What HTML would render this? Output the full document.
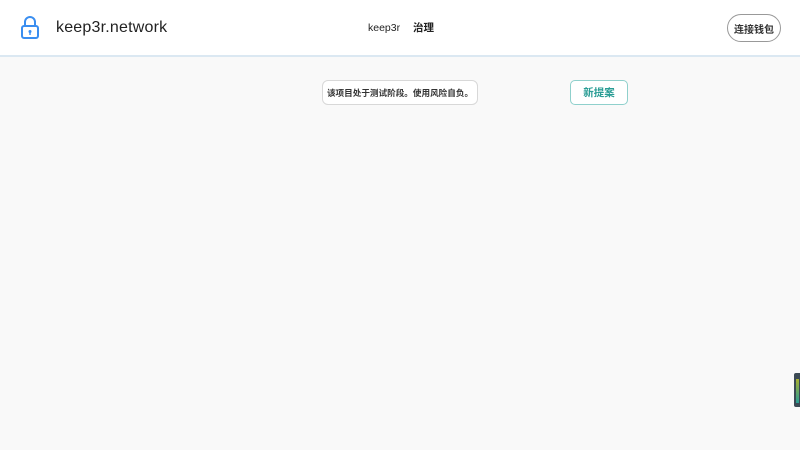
<!DOCTYPE html>
<html><head><meta charset="utf-8"><style>
body{margin:0;width:800px;height:450px;background:#f9f9f9;font-family:"Liberation Sans","Noto Sans CJK SC",sans-serif;position:relative;overflow:hidden}
.hdr{position:absolute;left:0;top:0;width:800px;height:55px;background:#fff;border-bottom:2px solid #dbe8f2}
.logo{position:absolute;left:56px;top:18px;font-size:16px;line-height:20px;color:#222;letter-spacing:.2px}
.nav{position:absolute;top:21px;font-size:10.5px;line-height:14px;color:#222}
.btn{position:absolute;left:727px;top:14px;width:52px;height:26px;border:1.5px solid #999;border-radius:14px;font-size:10px;font-weight:bold;color:#333;background:#fff;white-space:nowrap;display:flex;align-items:center;justify-content:center}
.notice{position:absolute;left:322px;top:80px;width:154px;height:23px;border:1.5px solid #d8d8d8;border-radius:6px;background:#fff;font-size:8.6px;font-weight:bold;color:#333;text-align:center;white-space:nowrap;display:flex;align-items:center;justify-content:center}
.new{position:absolute;left:570px;top:80px;width:56px;height:23px;border:1.5px solid #8fd0cc;border-radius:5px;background:#fff;color:#2a9d95;font-size:10.5px;font-weight:bold;display:flex;align-items:center;justify-content:center}
</style></head><body>
<div class="hdr">
<svg style="position:absolute;left:20px;top:15px" width="20" height="25" viewBox="0 0 20 25"><path d="M5 11V7a5 5 0 0 1 10 0v4" fill="none" stroke="#3a8ef0" stroke-width="2"/><rect x="2" y="11" width="16" height="12" rx="2" fill="none" stroke="#3a8ef0" stroke-width="2"/><circle cx="10" cy="16.5" r="1.5" fill="#3a8ef0"/><rect x="9.3" y="17" width="1.4" height="3" fill="#3a8ef0"/></svg>
<div class="logo">keep3r.network</div>
<div class="nav" style="left:368px">keep3r</div>
<div class="nav" style="left:413px;font-weight:bold">治理</div>
<div class="btn">连接钱包</div>
</div>
<div class="notice">该项目处于测试阶段。使用风险自负。</div>
<div class="new">新提案</div>
<div style="position:absolute;left:794px;top:373px;width:6px;height:34px;background:#3c4a55;border-radius:2px 0 0 2px"><div style="margin:6px 0 0 2px;width:3px;height:24px;background:linear-gradient(#a8b030,#2a9d95)"></div></div>
</body></html>
